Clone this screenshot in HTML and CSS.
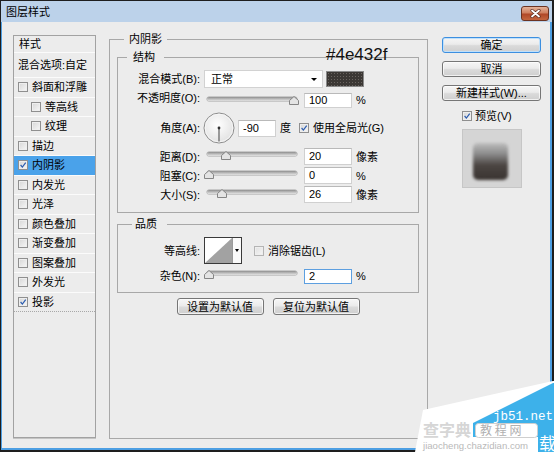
FILE: index.html
```html
<!DOCTYPE html>
<html lang="zh">
<head>
<meta charset="utf-8">
<title>图层样式</title>
<link rel="stylesheet" href="styles.css">
</head>
<body>
<div class="window">
  <div class="titlebar">
    <span class="title">图层样式</span>
    <span class="close"><svg width="11" height="9" viewBox="0 0 11 9"><path d="M2 1.5 L9 7.5 M9 1.5 L2 7.5" stroke="#5a2a1c" stroke-width="3.2" stroke-linecap="round"/><path d="M2 1.5 L9 7.5 M9 1.5 L2 7.5" stroke="#ffffff" stroke-width="1.8" stroke-linecap="round"/></svg></span>
  </div>
  <div class="frame">
    <div class="list">
      <div class="li head">样式</div>
      <div class="li blend">混合选项:自定</div>
      <div class="li"><span class="cb"></span>斜面和浮雕</div>
      <div class="li sub"><span class="cb"></span>等高线</div>
      <div class="li sub"><span class="cb"></span>纹理</div>
      <div class="li"><span class="cb"></span>描边</div>
      <div class="li sel"><span class="cb"><svg viewBox="0 0 10 10"><path d="M2 5 L4.2 7.6 L8.4 2" stroke="#2c5db0" stroke-width="1.5" fill="none"/></svg></span>内阴影</div>
      <div class="li"><span class="cb"></span>内发光</div>
      <div class="li"><span class="cb"></span>光泽</div>
      <div class="li"><span class="cb"></span>颜色叠加</div>
      <div class="li"><span class="cb"></span>渐变叠加</div>
      <div class="li"><span class="cb"></span>图案叠加</div>
      <div class="li"><span class="cb"></span>外发光</div>
      <div class="li last"><span class="cb"><svg viewBox="0 0 10 10"><path d="M2 5 L4.2 7.6 L8.4 2" stroke="#2c5db0" stroke-width="1.5" fill="none"/></svg></span>投影</div>
    </div>

    <fieldset class="group main">
      <legend>内阴影</legend>
      <fieldset class="group struct">
        <legend>结构</legend>
        <div class="row r-blend">
          <span class="lbl">混合模式(B):</span>
          <div class="select">正常<span class="arrow"></span></div>
          <div class="swatch"></div>
        </div>
        <div class="row r-opacity">
          <span class="lbl">不透明度(O):</span>
          <div class="slider"><div class="track"></div><svg class="thumb" style="left:85px" viewBox="0 0 10 9"><path d="M5 0.5 L9.5 4.5 V8.5 H0.5 V4.5 Z" fill="#e4e4e4" stroke="#858585"/></svg></div>
          <div class="num short">100</div>
          <span class="unit">%</span>
        </div>
        <div class="row r-angle">
          <span class="lbl">角度(A):</span>
          <svg class="dial" width="32" height="32" viewBox="0 0 32 32"><defs><radialGradient id="dg" cx="0.45" cy="0.4" r="0.6"><stop offset="0" stop-color="#ffffff"/><stop offset="1" stop-color="#e2e2e2"/></radialGradient></defs><circle cx="16" cy="16" r="15" fill="url(#dg)" stroke="#8d8d8d"/><circle cx="16" cy="16" r="13.8" fill="none" stroke="#f6f6f6"/><path d="M16 16 V29.5" stroke="#5e5e5e" stroke-width="1.2"/><circle cx="16" cy="16" r="1.4" fill="#333"/></svg>
          <div class="num angle">-90</div>
          <span class="unit deg">度</span>
          <span class="cb"><svg viewBox="0 0 10 10"><path d="M2 5 L4.2 7.6 L8.4 2" stroke="#2c5db0" stroke-width="1.5" fill="none"/></svg></span>
          <span class="cbtext">使用全局光(G)</span>
        </div>
        <div class="row r-small">
          <span class="lbl">距离(D):</span>
          <div class="slider"><div class="track"></div><svg class="thumb" style="left:17px" viewBox="0 0 10 9"><path d="M5 0.5 L9.5 4.5 V8.5 H0.5 V4.5 Z" fill="#e4e4e4" stroke="#858585"/></svg></div>
          <div class="num">20</div>
          <span class="unit">像素</span>
        </div>
        <div class="row r-small">
          <span class="lbl">阻塞(C):</span>
          <div class="slider"><div class="track"></div><svg class="thumb" style="left:0px" viewBox="0 0 10 9"><path d="M5 0.5 L9.5 4.5 V8.5 H0.5 V4.5 Z" fill="#e4e4e4" stroke="#858585"/></svg></div>
          <div class="num">0</div>
          <span class="unit">%</span>
        </div>
        <div class="row r-small">
          <span class="lbl">大小(S):</span>
          <div class="slider"><div class="track"></div><svg class="thumb" style="left:13px" viewBox="0 0 10 9"><path d="M5 0.5 L9.5 4.5 V8.5 H0.5 V4.5 Z" fill="#e4e4e4" stroke="#858585"/></svg></div>
          <div class="num">26</div>
          <span class="unit">像素</span>
        </div>
      </fieldset>

      <fieldset class="group quality">
        <legend>品质</legend>
        <div class="row r-contour">
          <span class="lbl">等高线:</span>
          <div class="contour">
            <svg class="curve" width="27" height="25" viewBox="0 0 27 25"><rect width="27" height="25" fill="#ffffff"/><polygon points="0,25 27,0 27,25" fill="#a2a2a2"/></svg>
            <span class="dd"><span class="arrow"></span></span>
          </div>
          <span class="cb dis"></span>
          <span class="cbtext">消除锯齿(L)</span>
        </div>
        <div class="row r-noise">
          <span class="lbl">杂色(N):</span>
          <div class="slider"><div class="track"></div><svg class="thumb" style="left:0px" viewBox="0 0 10 9"><path d="M5 0.5 L9.5 4.5 V8.5 H0.5 V4.5 Z" fill="#e4e4e4" stroke="#858585"/></svg></div>
          <div class="num short focus">2</div>
          <span class="unit">%</span>
        </div>
      </fieldset>

      <div class="btn-row">
        <button class="btn wide">设置为默认值</button>
        <button class="btn wide">复位为默认值</button>
      </div>
    </fieldset>

    <div class="side">
      <button class="btn side-btn default">确定</button>
      <button class="btn side-btn">取消</button>
      <button class="btn side-btn">新建样式(W)...</button>
      <div class="preview-check"><span class="cb"><svg viewBox="0 0 10 10"><path d="M2 5 L4.2 7.6 L8.4 2" stroke="#2c5db0" stroke-width="1.5" fill="none"/></svg></span><span>预览(V)</span></div>
      <div class="preview"><div class="shape"></div></div>
    </div>
  </div>

  <div class="hex">#4e432f</div>

  <svg class="watermark" width="140" height="72" viewBox="0 0 140 72">
    <polygon points="9,30 139,1 140,1 140,72 1,72" fill="#ffffff"/>
    <polygon points="139,3 140,3 140,72 124,72 124,57 59,57 59,43" fill="#3db1ea"/>
    <text x="79" y="40" class="wm-jb">jb51.net</text>
    <text x="9" y="56" class="wm-cz">查字典</text>
    <rect x="61.5" y="43.5" width="62" height="14" rx="3" fill="#ffffff" stroke="#cfcfcf"/>
    <text x="66" y="55" class="wm-jc">教 程 网</text>
    <text x="125" y="70" class="wm-zai">载</text>
    <text x="9" y="69" class="wm-url">jiaocheng.chazidian.com</text>
  </svg>
</div>
</body>
</html>
```
FILE: styles.css
```css
* { box-sizing: border-box; }
html, body { margin: 0; padding: 0; }
body {
  width: 554px;
  height: 452px;
  overflow: hidden;
  background: #ececec;
  font-family: "Liberation Sans", "Noto Sans CJK SC", sans-serif;
  font-size: 11px;
  color: #000;
}

.window {
  position: relative;
  width: 554px;
  height: 452px;
  display: flex;
  flex-direction: column;
  border-style: solid;
  border-color: #1e1e1e;
  border-width: 1px 2px 2px 1px;
  background: #ececec;
}

.titlebar {
  height: 21px;
  flex: none;
  display: flex;
  align-items: center;
  justify-content: space-between;
  padding: 0 3px 0 5px;
  background: #bcd2ea;
}
.title { line-height: 14px; }
.close {
  width: 28px;
  height: 15px;
  margin-top: 3px;
  border: 1px solid #6b3322;
  border-radius: 3px;
  background: linear-gradient(#e4b299, #cf8060 45%, #b04828 55%, #c4663f);
  display: flex;
  align-items: center;
  justify-content: center;
}
.close svg { display: block; }

.frame {
  flex: 1;
  display: flex;
  align-items: flex-start;
  padding: 10px 9px 9px 11px;
  border-style: solid;
  border-color: #4d9fe3;
  border-width: 0 2px 2px 1px;
}

/* ---------- left list ---------- */
.list {
  flex: none;
  width: 83px;
  height: 403px;
  margin-top: 3px;
  border: 1px solid #a2a2a2;
  box-shadow: 0 1px 0 #c4c4c4;
  background: #ececec;
}
.li {
  display: flex;
  align-items: center;
  gap: 4px;
  height: 19.5px;
  padding-left: 4px;
  border-bottom: 1px solid #fbfbfb;
  line-height: 12px;
  white-space: nowrap;
}
.li.head { height: 17px; padding-left: 5px; }
.li.blend { height: 25px; }
.li.sub { padding-left: 17px; }
.li.sel { background: #4aa2ea; }
.li.last { border-bottom: 1px dotted #a8a8a8; }

.cb {
  flex: none;
  width: 10px;
  height: 10px;
  border: 1px solid #8f8f8f;
  background: linear-gradient(135deg, #d6d6d6, #f7f7f7);
  box-shadow: inset 0 0 0 1px #eeeeee;
  display: flex;
}
.cb svg { width: 8px; height: 8px; }
.cb.dis { border-color: #b4b4b4; background: linear-gradient(135deg, #e0e0e0, #f6f6f6); }

/* ---------- group boxes ---------- */
.group {
  margin: 0;
  padding: 0;
  min-width: 0;
  border: 1px solid #a8a8a8;
}
.group > legend {
  height: 14px;
  line-height: 14px;
  padding: 0 5px;
  margin-left: 0;
}
.main {
  flex: none;
  width: 319px;
  height: 407px;
  margin-left: 13px;
  padding: 0 8px 0 7px;
}
.main > legend { margin-left: 7px; }
.struct { margin-top: 4px; padding: 0 0 9px 0; }
.struct > legend { margin-left: 9px; padding: 0 9px 0 6px; }
.quality { margin-top: 4px; padding: 0 0 8px 0; }
.quality > legend { margin-left: 14px; padding: 0 10px 0 3px; }

.row {
  display: flex;
  align-items: center;
  white-space: nowrap;
}
.lbl {
  flex: none;
  width: 82px;
  margin-right: 4px;
  text-align: right;
  line-height: 12px;
}
.r-blend { margin-top: 6px; height: 18px; }
.r-opacity { margin-top: 4px; height: 16px; }
.r-opacity .lbl { margin-top: -4px; }
.r-opacity .slider { margin-top: 3px; }
.r-angle { margin-top: 4px; height: 32px; }
.r-small { margin-top: 2px; height: 17px; }
.r-angle + .r-small { margin-top: 4px; }
.r-contour { margin-top: 6px; height: 27px; }
.r-noise { margin-top: 4px; height: 16px; }
.r-noise .slider { margin-top: -1px; }

.select {
  flex: none;
  position: relative;
  width: 119px;
  height: 18px;
  padding-left: 6px;
  line-height: 16px;
  background: #fff;
  border: 1px solid #d2d2d2;
}
.select .arrow {
  position: absolute;
  right: 5px;
  top: 7px;
  border-left: 3px solid transparent;
  border-right: 3px solid transparent;
  border-top: 3px solid #000;
}
.swatch {
  flex: none;
  width: 38px;
  height: 16px;
  margin-left: 3px;
  border: 1px solid #8a8a8a;
  background-color: #3c3835;
  background-image: radial-gradient(circle, #6a6460 0.6px, transparent 0.9px);
  background-size: 3px 3px;
}

.slider {
  flex: none;
  position: relative;
  width: 96px;
  height: 13px;
}
.slider .track {
  margin: 2px 3px 0;
  height: 4px;
  border-radius: 2px;
  background: linear-gradient(#8e8e8e, #bdbdbd 50%, #e2e2e2);
  box-shadow: 0 0 0 0.5px #a4a4a4;
}
.slider .thumb {
  position: absolute;
  top: 1px;
  width: 10px;
  height: 9px;
}

.num {
  flex: none;
  width: 48px;
  height: 17px;
  margin-left: 4px;
  padding-left: 4px;
  line-height: 15px;
  background: #fff;
  border: 1px solid #d0d0d0;
  border-top-color: #b9b9b9;
}
.num.short { height: 15px; line-height: 13px; }
.num.focus { border-color: #5d9fe0; }
.num.angle { width: 38px; margin-left: 3px; }
.unit { margin-left: 4px; line-height: 12px; }
.deg { margin-right: 8px; }
.cbtext { margin-left: 4px; line-height: 12px; }

.dial { flex: none; display: block; width: 32px; height: 32px; margin-left: -1px; }

.contour {
  flex: none;
  display: flex;
  width: 38px;
  height: 27px;
  margin-right: 12px;
  border: 1px solid #3a3a3a;
  background: #fff;
}
.contour .curve { display: block; }
.contour .dd {
  position: relative;
  flex: 1;
  border-left: 1px solid #9a9a9a;
  background: #fafafa;
}
.contour .dd .arrow {
  position: absolute;
  left: 2px;
  top: 11px;
  border-left: 2.5px solid transparent;
  border-right: 2.5px solid transparent;
  border-top: 3px solid #000;
}

/* ---------- buttons ---------- */
.btn {
  display: block;
  margin: 0;
  padding: 0;
  font: inherit;
  color: #000;
  height: 17px;
  line-height: 14px;
  text-align: center;
  border: 1px solid #767676;
  border-radius: 3px;
  background: linear-gradient(#f6f6f6, #ebebeb 45%, #dadada 55%, #cfcfcf);
  box-shadow: inset 0 0 0 1px rgba(255, 255, 255, 0.7);
}
.btn-row {
  display: flex;
  justify-content: center;
  gap: 9px;
  margin-top: 5px;
}
.btn.wide { width: 87px; }

.side {
  flex: none;
  width: 99px;
  margin-left: 14px;
  display: flex;
  flex-direction: column;
}
.side-btn { width: 99px; height: 16px; margin-top: 8px; }
.side-btn.default {
  margin-top: 5px;
  border-color: #3c8fe0;
  box-shadow: inset 0 0 0 1px #bfe0fb;
}
.preview-check {
  display: flex;
  align-items: center;
  gap: 3px;
  height: 12px;
  margin-top: 9px;
  margin-left: 20px;
  line-height: 12px;
}
.preview {
  width: 60px;
  height: 59px;
  margin-top: 7px;
  margin-left: 20px;
  border: 1px solid #c6c6c6;
  background: #d5d5d5;
  padding: 13px 0 0 10px;
  overflow: hidden;
}
.preview .shape {
  width: 35px;
  height: 37px;
  border-radius: 5px;
  background: linear-gradient(#bdbdbd 0%, #8a8a8a 30%, #4b4542 60%, #393330 100%);
  filter: blur(1.6px);
}

/* ---------- overlays ---------- */
.hex {
  position: absolute;
  left: 325px;
  top: 45px;
  font-family: "Liberation Sans", sans-serif;
  font-size: 17px;
  line-height: 17px;
  color: #111;
}
.watermark {
  position: absolute;
  right: -2px;
  bottom: -2px;
}
.wm-jb { font-family: "Liberation Mono", monospace; font-size: 12.5px; fill: #ffffff; }
.wm-cz { font-family: "Noto Sans CJK SC", sans-serif; font-size: 16px; font-weight: 700; fill: #d6d6d6; }
.wm-jc { font-family: "Noto Sans CJK SC", sans-serif; font-size: 12px; fill: #b0b0b0; }
.wm-zai { font-family: "Noto Sans CJK SC", sans-serif; font-size: 17px; fill: #ffffff; }
.wm-url { font-family: "Liberation Sans", sans-serif; font-size: 9.6px; fill: #b9b9b9; }
```
